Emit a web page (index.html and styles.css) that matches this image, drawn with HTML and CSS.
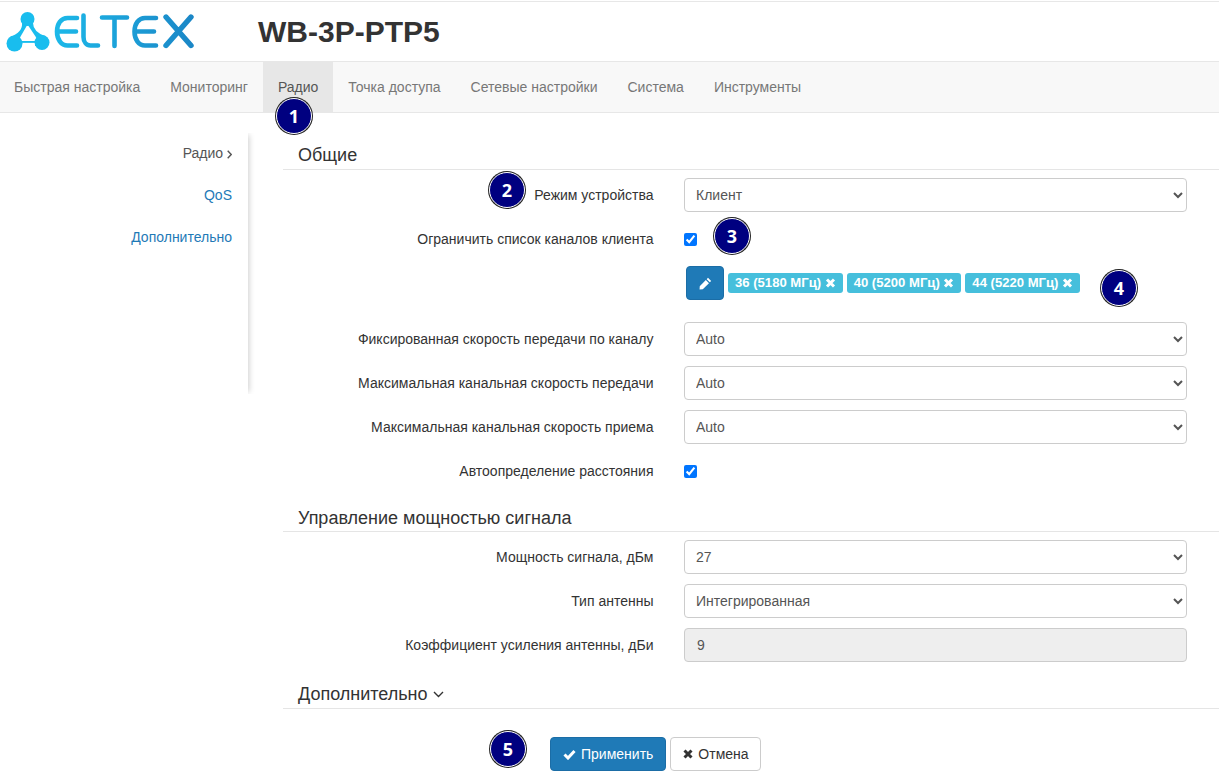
FILE: index.html
```html
<!DOCTYPE html>
<html lang="ru">
<head>
<meta charset="utf-8">
<title>WB-3P-PTP5</title>
<link rel="stylesheet" href="styles.css">
</head>
<body>
<header class="header">
  <svg class="logo" width="200" height="59" viewBox="0 2 200 59" role="img" aria-label="ELTEX">
    <defs>
      <linearGradient id="lg" gradientUnits="userSpaceOnUse" x1="50" y1="0" x2="195" y2="0">
        <stop offset="0" stop-color="#1cbaea"/>
        <stop offset="1" stop-color="#1b86c6"/>
      </linearGradient>
    </defs>
    <g fill="#19bdee">
      <path d="M22 23 Q23 32 10 37 L19 46 L37 46 L46 36.500 Q33 32 33 23 Z"/>
    </g>
    <path d="M27.500 24.500 L38.500 41 L18 41 Z" fill="#fff"/>
    <path d="M22 42.500 H35 V52 H22 Z" fill="#fff"/>
    <path d="M20 42 H37" stroke="#19bdee" stroke-width="1.500"/>
    <g fill="#19bdee">
      <circle cx="27.500" cy="19" r="7"/>
      <circle cx="14.500" cy="43.500" r="8"/>
      <circle cx="42" cy="42.500" r="7.500"/>
    </g>
    <g fill="none" stroke="url(#lg)" stroke-width="4.600" stroke-linecap="round" stroke-linejoin="round">
      <path d="M77 18 H67.500 C61 18 57 24 57 31.500 C57 39 61 45.500 67.500 45.500 H77 M58.500 31.500 H76"/>
      <path d="M83.500 15.500 V37 C83.500 42 86.500 45.500 90.500 45.500 H98"/>
      <path d="M102 17.500 H127 M114.500 17.500 V46"/>
      <path d="M156 18 H145 C138.500 18 134.500 24 134.500 31.500 C134.500 39 138.500 45.500 145 45.500 H156 M136 31.500 H154"/>
      <path d="M166 17 L191 45.500 M191 17 L166 45.500" stroke-width="5.400"/>
    </g>
  </svg>
  <h1 class="title">WB-3P-PTP5</h1>
</header>
<nav class="navbar">
  <a class="nav-link">Быстрая настройка</a>
  <a class="nav-link">Мониторинг</a>
  <a class="nav-link active">Радио</a>
  <a class="nav-link">Точка доступа</a>
  <a class="nav-link">Сетевые настройки</a>
  <a class="nav-link">Система</a>
  <a class="nav-link">Инструменты</a>
</nav>
<main class="layout">
  <aside class="sidebar">
    <a class="side-link current">Радио <svg class="chev-right" width="5" height="9" viewBox="0 0 5 9"><path d="M0.700 0.800l3.500 3.700-3.500 3.700" fill="none" stroke="#555" stroke-width="1.400"/></svg></a>
    <a class="side-link">QoS</a>
    <a class="side-link">Дополнительно</a>
  </aside>
  <section class="content">
    <h2 class="section-title first">Общие</h2>
    <div class="form-row">
      <label class="form-label">Режим устройства</label>
      <div class="form-control"><select class="select"><option>Клиент</option></select></div>
    </div>
    <div class="form-row">
      <label class="form-label">Ограничить список каналов клиента</label>
      <div class="form-control"><input class="check" type="checkbox" checked></div>
    </div>
    <div class="form-row tags-row">
      <div class="form-label"></div>
      <div class="form-control tags">
        <button class="btn-edit" type="button" aria-label="Изменить">
          <svg width="13" height="13" viewBox="0 0 12 12"><path d="M8.300 0.800 L11.200 3.700 L10 4.900 L7.100 2 Z M6.300 2.800 L9.200 5.700 L3.500 11.300 L0.500 11.500 L0.700 8.500 Z" fill="#fff"/></svg>
        </button>
        <span class="tag">36 (5180 МГц) <svg class="x" width="11" height="10" viewBox="0 0 10 10"><path d="M1.500 1.500l7 7M8.500 1.500l-7 7" stroke="#fff" stroke-width="3"/></svg></span>
        <span class="tag">40 (5200 МГц) <svg class="x" width="11" height="10" viewBox="0 0 10 10"><path d="M1.500 1.500l7 7M8.500 1.500l-7 7" stroke="#fff" stroke-width="3"/></svg></span>
        <span class="tag">44 (5220 МГц) <svg class="x" width="11" height="10" viewBox="0 0 10 10"><path d="M1.500 1.500l7 7M8.500 1.500l-7 7" stroke="#fff" stroke-width="3"/></svg></span>
      </div>
    </div>
    <div class="form-row">
      <label class="form-label">Фиксированная скорость передачи по каналу</label>
      <div class="form-control"><select class="select"><option>Auto</option></select></div>
    </div>
    <div class="form-row">
      <label class="form-label">Максимальная канальная скорость передачи</label>
      <div class="form-control"><select class="select"><option>Auto</option></select></div>
    </div>
    <div class="form-row">
      <label class="form-label">Максимальная канальная скорость приема</label>
      <div class="form-control"><select class="select"><option>Auto</option></select></div>
    </div>
    <div class="form-row">
      <label class="form-label">Автоопределение расстояния</label>
      <div class="form-control"><input class="check" type="checkbox" checked></div>
    </div>
    <h2 class="section-title">Управление мощностью сигнала</h2>
    <div class="form-row">
      <label class="form-label">Мощность сигнала, дБм</label>
      <div class="form-control"><select class="select"><option>27</option></select></div>
    </div>
    <div class="form-row">
      <label class="form-label">Тип антенны</label>
      <div class="form-control"><select class="select"><option>Интегрированная</option></select></div>
    </div>
    <div class="form-row">
      <label class="form-label">Коэффициент усиления антенны, дБи</label>
      <div class="form-control"><input class="input" type="text" value="9" disabled></div>
    </div>
    <h2 class="section-title last">Дополнительно <svg class="chev-down" width="11" height="7" viewBox="0 0 11 7"><path d="M1 1l4.500 4.500L10 1" fill="none" stroke="#333" stroke-width="1.400"/></svg></h2>
    <div class="actions">
      <button class="btn primary" type="button"><svg width="13" height="11" viewBox="0 0 13 11"><path d="M1.500 5.500l3.500 3.500 6.500-7" fill="none" stroke="#fff" stroke-width="3"/></svg> Применить</button>
      <button class="btn default" type="button"><svg width="10" height="10" viewBox="0 0 10 10"><path d="M1.500 1.500l7 7M8.500 1.500l-7 7" stroke="#333" stroke-width="3"/></svg> Отмена</button>
    </div>
  </section>
</main>
<span class="marker m1">1</span>
<span class="marker m2">2</span>
<span class="marker m3">3</span>
<span class="marker m4">4</span>
<span class="marker m5">5</span>
</body>
</html>
```
FILE: styles.css
```css
* { box-sizing: border-box; }
html, body { margin: 0; padding: 0; }
body {
  position: relative;
  height: 784px;
  overflow: hidden;
  background: #fff;
  color: #333;
  font-family: "Liberation Sans", Arial, sans-serif;
  font-size: 14px;
  line-height: 20px;
}
.header {
  height: 60px;
  border-top: 1px solid #e7e7e7;
  margin-top: 1px;
  display: flex;
  align-items: center;
}
.logo { display: block; flex: none; }
.title {
  margin: 0 0 0 58px;
  font-size: 30px;
  line-height: 33px;
  font-weight: 700;
  color: #333;
}
.navbar {
  height: 52px;
  margin-left: -1px;
  display: flex;
  background: #f8f8f8;
  border-top: 1px solid #e7e7e7;
  border-bottom: 1px solid #e7e7e7;
}
.nav-link {
  padding: 15px;
  color: #777;
  line-height: 20px;
}
.nav-link.active { background: #e7e7e7; color: #555; }
.layout { display: flex; align-items: flex-start; }
.sidebar {
  width: 248px;
  height: 261px;
  margin-top: 20px;
  flex: none;
  box-shadow: 3px 0 6px -2px rgba(0, 0, 0, 0.2);
  clip-path: inset(0 -12px 0 0);
  display: flex;
  flex-direction: column;
  align-items: flex-end;
  padding-right: 16px;
}
.side-link {
  display: block;
  height: 42px;
  padding-top: 10px;
  color: #1f7ab7;
  text-align: right;
}
.side-link.current { color: #555; }
.chev-right { vertical-align: -0.5px; }
.content { flex: 1; margin-left: 35px; padding-top: 32px; }
.section-title {
  margin: 20px 0 8px;
  padding: 0 0 0 15px;
  font-size: 18px;
  font-weight: 400;
  line-height: 21px;
  color: #333;
  border-bottom: 1px solid #e5e5e5;
  height: 24px;
}
.section-title.first { margin-top: 0; height: 25px; }
.section-title.last { margin-top: 22px; height: 25px; }
.chev-down { vertical-align: 2px; }
.form-row { display: flex; margin-bottom: 10px; min-height: 34px; }
.form-label {
  width: 370.500px;
  flex: none;
  text-align: right;
  padding-top: 7px;
  font-weight: 400;
}
.form-control { width: 503px; margin-left: 30.500px; flex: none; }
.select, .input {
  display: block;
  width: 100%;
  height: 34px;
  padding: 6px 7px;
  font: inherit;
  color: #555;
  background: #fff;
  border: 1px solid #ccc;
  border-radius: 4px;
}
.input { padding: 6px 12px; background: #eee; opacity: 1; }
.check { display: block; width: 13px; height: 13px; margin: 11px 0 0 0; }
.tags { display: flex; align-items: center; gap: 4px; padding-left: 2px; }
.btn-edit {
  width: 38px;
  height: 34px;
  padding: 0;
  border: 1px solid #1b6da6;
  border-radius: 4px;
  background: #1f7ab7;
  display: flex;
  align-items: center;
  justify-content: center;
}
.tag {
  height: 20px;
  display: inline-flex;
  align-items: center;
  gap: 3.600px;
  padding: 0 7px;
  border-radius: 3px;
  background: #46bfdc;
  color: #fff;
  font-size: 13.100px;
  font-weight: 700;
  white-space: nowrap;
}
.tags-row { margin-bottom: 22px; }
.actions { display: flex; gap: 4px; padding-left: 267px; margin-top: 28px; }
.btn {
  height: 34px;
  padding: 0 11px 0 12px;
  font: inherit;
  border-radius: 4px;
  border: 1px solid;
  display: inline-flex;
  align-items: center;
  gap: 5px;
}
.btn.primary { background: #1f7ab7; border-color: #1b6da6; color: #fff; padding-right: 12px; }
.btn.default { background: #fff; border-color: #ccc; color: #333; }
.marker {
  position: absolute;
  width: 36px;
  height: 36px;
  border-radius: 50%;
  background: #000080;
  border: 1px solid #fff;
  box-shadow: 0 0 0 1px #222;
  color: #fff;
  font-family: "Noto Sans", "Open Sans", sans-serif;
  font-weight: 700;
  font-size: 18px;
  line-height: 34px;
  text-align: center;
}
.m1 { left: 276px; top: 98px; }
.m2 { left: 489px; top: 172px; }
.m3 { left: 714px; top: 218px; }
.m4 { left: 1101px; top: 270px; }
.m5 { left: 490px; top: 731px; }
```
